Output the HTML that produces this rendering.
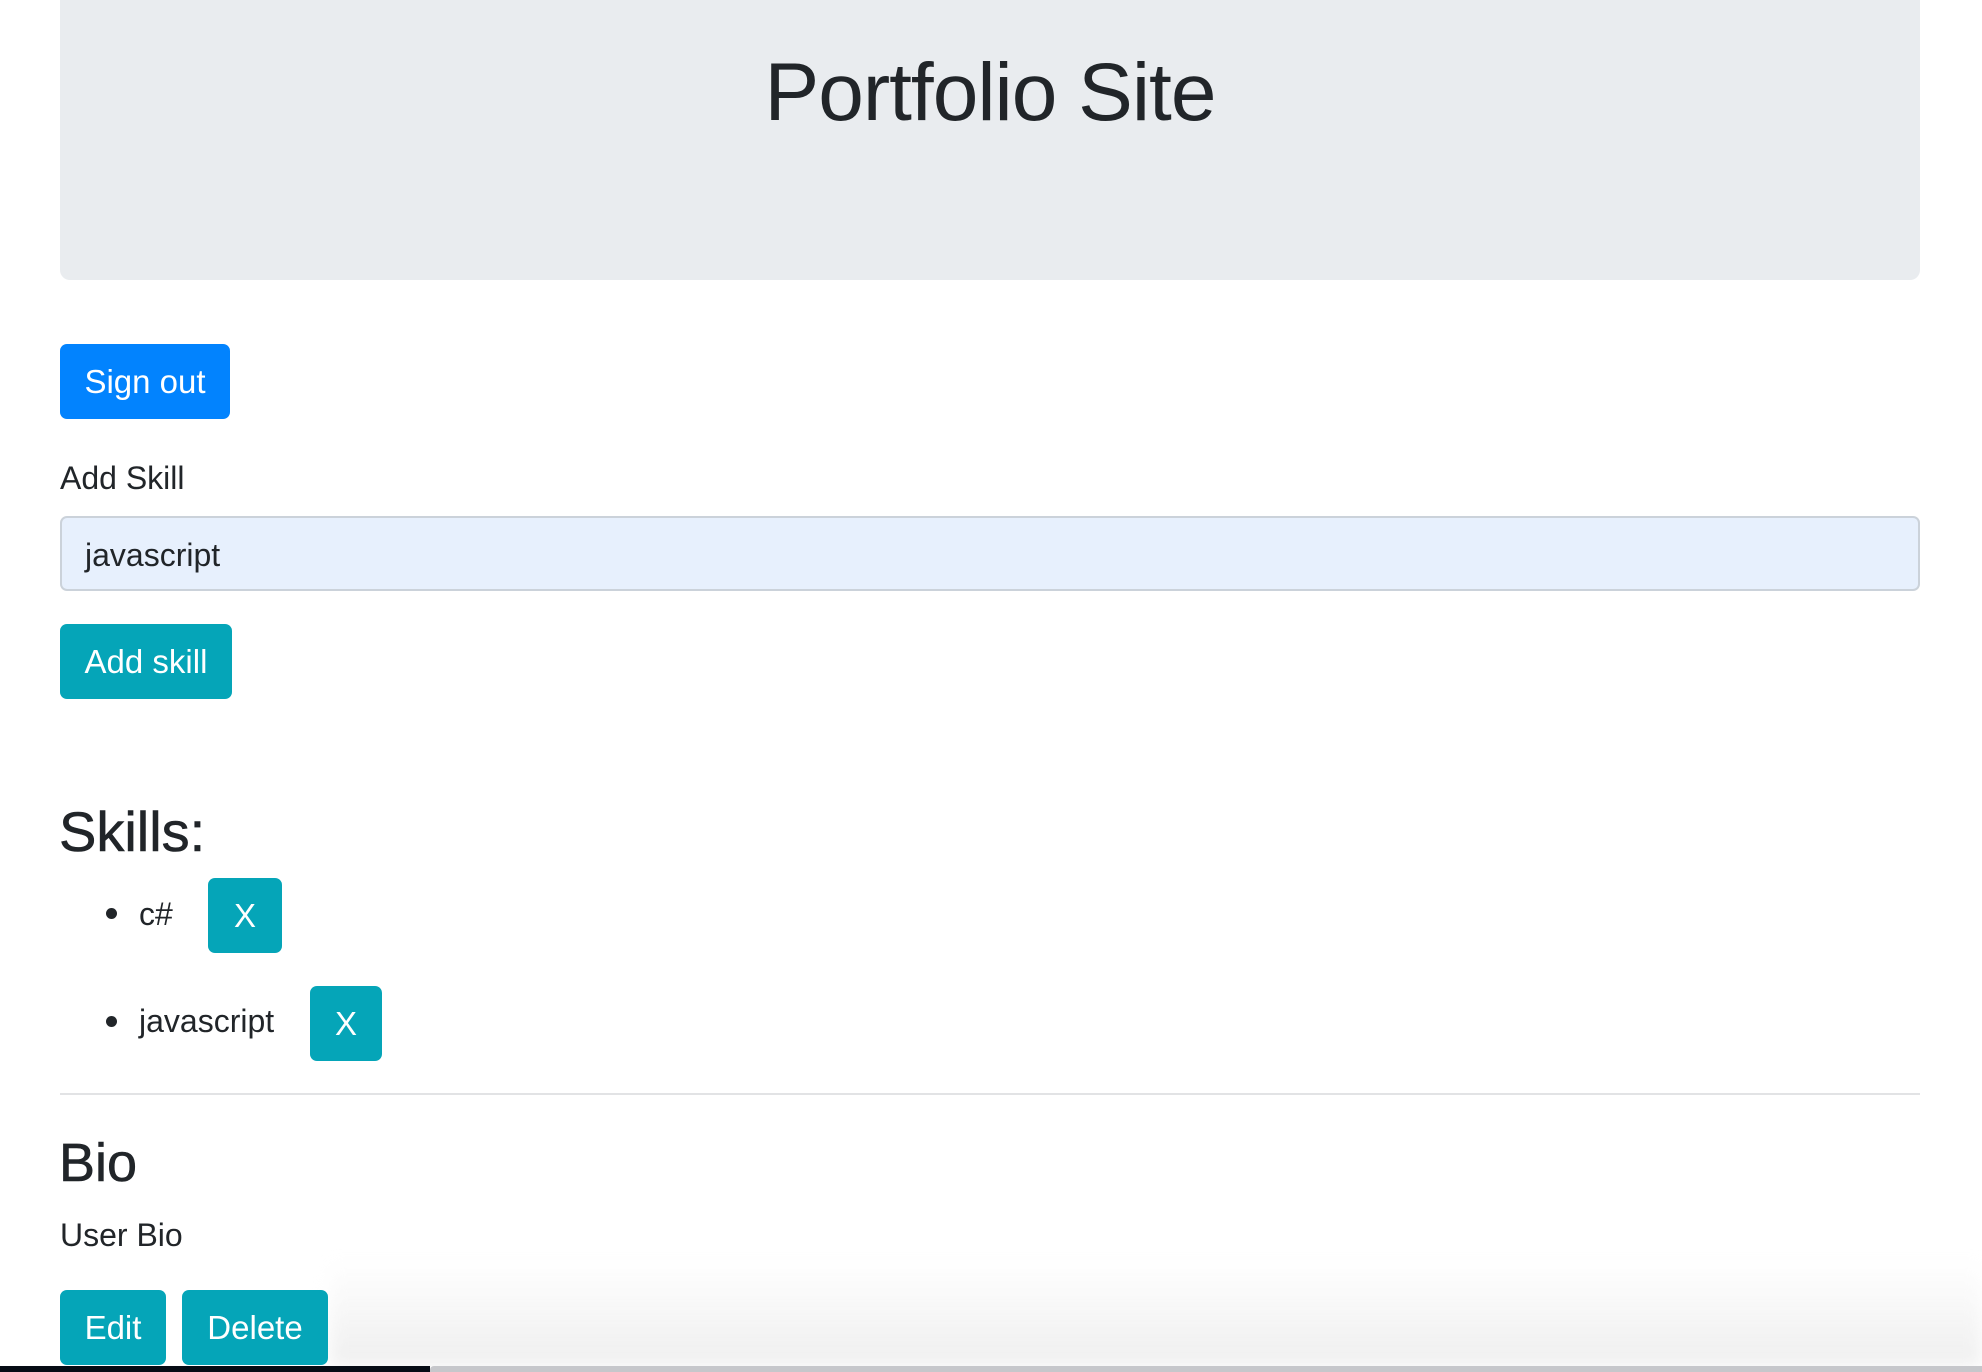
<!DOCTYPE html>
<html><head><meta charset="utf-8"><style>
html,body{margin:0;padding:0;width:1982px;height:1372px;overflow:hidden;background:#fff;font-family:"Liberation Sans",Arial,sans-serif;color:#212529;}
.a{position:absolute;}
.btn{position:absolute;color:#fff;font-size:33px;display:flex;align-items:center;justify-content:center;border-radius:7px;background:#05a5b8;}
.t{position:absolute;white-space:nowrap;line-height:1;}
</style></head><body>
<div class="a" style="left:60px;top:0;width:1860px;height:280px;background:#e9ecef;border-radius:0 0 10px 10px;"></div>
<div class="t" style="left:0;width:1980px;text-align:center;top:52px;font-size:82px;letter-spacing:-1px;">Portfolio Site</div>
<div class="btn" style="left:60px;top:344px;width:170px;height:75px;background:#0283fe;">Sign out</div>
<div class="t" style="left:60px;top:462px;font-size:32px;">Add Skill</div>
<div class="a" style="left:60px;top:516px;width:1856px;height:71px;background:#e7f0fd;border:2px solid #cbd2da;border-radius:7px;"></div>
<div class="t" style="left:85px;top:539px;font-size:32px;">javascript</div>
<div class="btn" style="left:60px;top:624px;width:172px;height:75px;">Add skill</div>
<div class="t" style="left:59px;top:804px;font-size:56px;-webkit-text-stroke:0.6px #212529;">Skills:</div>
<div class="a" style="left:106px;top:908px;width:11px;height:11px;border-radius:50%;background:#212529;"></div>
<div class="t" style="left:139px;top:898px;font-size:32px;">c#</div>
<div class="btn" style="left:208px;top:878px;width:74px;height:75px;">X</div>
<div class="a" style="left:106px;top:1016px;width:11px;height:11px;border-radius:50%;background:#212529;"></div>
<div class="t" style="left:139px;top:1005px;font-size:32px;">javascript</div>
<div class="btn" style="left:310px;top:986px;width:72px;height:75px;">X</div>
<div class="a" style="left:60px;top:1093px;width:1860px;height:2px;background:#e2e3e5;"></div>
<div class="t" style="left:59px;top:1136px;font-size:54px;-webkit-text-stroke:0.6px #212529;">Bio</div>
<div class="t" style="left:60px;top:1219px;font-size:32px;">User Bio</div>
<div class="a" style="left:330px;top:1260px;width:1652px;height:106px;background:linear-gradient(to bottom,rgba(255,255,255,0),rgba(238,238,238,0.95));filter:blur(8px);"></div>
<div class="btn" style="left:60px;top:1290px;width:106px;height:75px;">Edit</div>
<div class="btn" style="left:182px;top:1290px;width:146px;height:75px;">Delete</div>
<div class="a" style="left:0;top:1366px;width:430px;height:6px;background:#060c15;"></div>
<div class="a" style="left:430px;top:1366px;width:1552px;height:6px;background:#c6c7cb;border-radius:4px 0 0 0;"></div>
</body></html>
